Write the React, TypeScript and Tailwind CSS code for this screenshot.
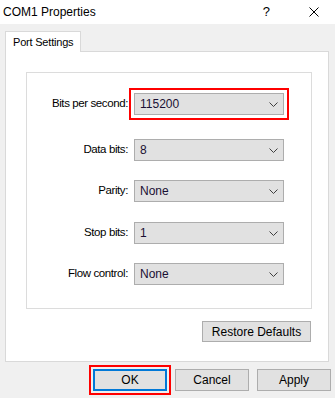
import React from 'react'

const rows = [
  { label: 'Bits per second:', value: '115200', mark: true, gap: 'mt-0' },
  { label: 'Data bits:', value: '8', mark: false, gap: 'mt-[24px]' },
  { label: 'Parity:', value: 'None', mark: false, gap: 'mt-[19px]' },
  { label: 'Stop bits:', value: '1', mark: false, gap: 'mt-[20px]' },
  { label: 'Flow control:', value: 'None', mark: false, gap: 'mt-[19px]' },
]

function Chevron() {
  return (
    <svg width="9" height="5" viewBox="0 0 9 5" className="shrink-0">
      <path d="M0.5 0.5 L4.5 4.5 L8.5 0.5" fill="none" stroke="#404040" strokeWidth="1" />
    </svg>
  )
}

function Combo({ value, mark }: { value: string; mark: boolean }) {
  return (
    <div
      className={`w-[150px] h-[22px] bg-[#e1e1e1] border border-[#adadad] flex items-center pl-[5px] pr-[5px] ${
        mark ? 'outline-2 outline-[#f00] outline-offset-[3px]' : ''
      }`}
    >
      <span className="flex-1 text-[12px] text-[#1a1033]">{value}</span>
      <Chevron />
    </div>
  )
}

function Button({ label, focused }: { label: string; focused?: boolean }) {
  return (
    <div
      className={`w-[74px] h-[22px] bg-[#e1e1e1] flex items-center justify-center text-[12px] ${
        focused
          ? 'border-2 border-[#0078d7] outline-2 outline-[#f00] outline-offset-2'
          : 'border border-[#adadad]'
      }`}
    >
      {label}
    </div>
  )
}

export default function App() {
  return (
    <div className="w-[335px] h-[398px] bg-[#f0f0f0] overflow-hidden text-black font-['Liberation_Sans',Arial,sans-serif] text-[11px]">
      {/* title bar */}
      <div className="h-[24px] bg-white flex items-center">
        <span className="pl-[3px] text-[12px]">COM1 Properties</span>
        <span className="ml-auto text-[13px] mr-[39px]">?</span>
        <svg width="10" height="10" viewBox="0 0 10 10" className="mr-[16px]">
          <path d="M0.5 0.5 L9.5 9.5 M9.5 0.5 L0.5 9.5" stroke="#000" strokeWidth="1" />
        </svg>
      </div>

      <div className="pt-[7px] pl-[5px]">
        {/* tab */}
        <div className="relative z-10 -mb-px w-[76px] h-[21px] bg-white border border-b-0 border-[#d9d9d9] flex items-center pl-[7px] text-[11px] whitespace-nowrap tracking-[-0.2px]">
          Port Settings
        </div>

        {/* panel */}
        <div className="w-[324px] h-[311px] bg-white border border-[#d9d9d9] pt-[20px] pl-[20px]">
          <div className="w-[286px] h-[237px] border border-[#dcdcdc] pt-[20px]">
            {rows.map((r) => (
              <div key={r.label} className={`flex items-center ${r.gap}`}>
                <span className="w-[101px] text-right text-[11.5px] tracking-[-0.4px] whitespace-nowrap">{r.label}</span>
                <div className="ml-[6px]">
                  <Combo value={r.value} mark={r.mark} />
                </div>
              </div>
            ))}
          </div>
          <div className="w-[285px] flex justify-end mt-[12px]">
            <div className="w-[109px] h-[21px] bg-[#e1e1e1] border border-[#adadad] flex items-center justify-center text-[12px]">
              Restore Defaults
            </div>
          </div>
        </div>
      </div>

      {/* dialog buttons */}
      <div className="mt-[7px] pl-[93px] flex gap-2">
        <Button label="OK" focused />
        <Button label="Cancel" />
        <Button label="Apply" />
      </div>
    </div>
  )
}
